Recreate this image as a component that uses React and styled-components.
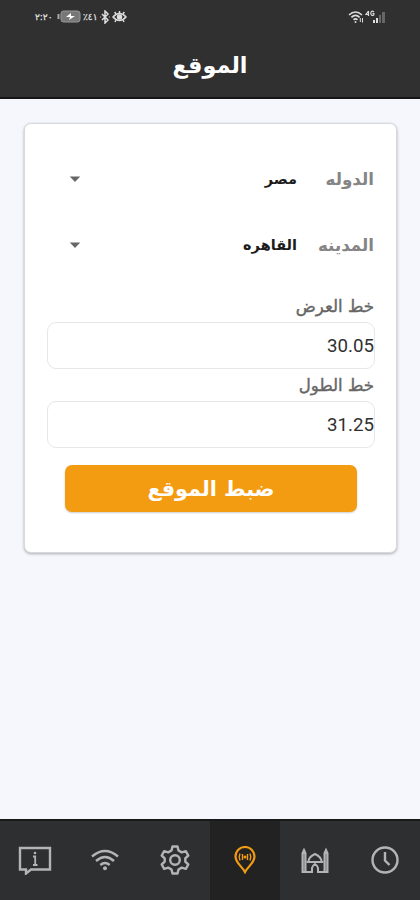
import React from 'react';
import styled, { createGlobalStyle } from 'styled-components';

const GlobalStyle = createGlobalStyle`
  * {
    box-sizing: border-box;
  }
  body {
    margin: 0;
    background: #f5f7fc;
    font-family: 'DejaVu Sans', sans-serif;
  }
`;

const Screen = styled.div`
  display: flex;
  flex-direction: column;
  width: 420px;
  height: 900px;
  overflow: hidden;
  background: #f5f7fc;
`;

const Header = styled.header`
  height: 99px;
  background: #303030;
  border-bottom: 2px solid #151515;
`;

const StatusBar = styled.div`
  display: flex;
  justify-content: space-between;
  align-items: center;
  height: 33px;
  padding: 0 34px 0 35px;
  color: #dedede;
`;

const StatusGroup = styled.div`
  display: flex;
  align-items: center;
  gap: ${({ $gap }) => $gap}px;
`;

const StatusText = styled.span`
  width: ${({ $width }) => $width}px;
  font-size: 9px;
  line-height: 12px;
  white-space: nowrap;
  direction: ltr;
  unicode-bidi: bidi-override;
  -webkit-text-stroke: 0.3px currentColor;
`;

const Title = styled.h1`
  margin: 0;
  height: 64px;
  line-height: 64px;
  font-size: 22.4px;
  font-weight: bold;
  text-align: center;
  color: #fff;
`;

const Content = styled.main`
  flex: 1;
  padding: 24px 23px 0 24px;
`;

const Card = styled.section`
  direction: rtl;
  height: 430px;
  padding: 22px 21px 0 22px;
  background: #fff;
  border: 1px solid #d8d9dc;
  border-radius: 7px;
  box-shadow: 0 1px 3px rgba(0, 0, 0, 0.3);
`;

const SelectRow = styled.div`
  display: flex;
  align-items: center;
  height: 66px;
  padding: 0 1px 0 22px;
`;

const SelectLabel = styled.span`
  width: 77px;
  font-size: 16.7px;
  font-weight: bold;
  white-space: nowrap;
  color: #858585;
`;

const SelectValue = styled.span`
  flex: 1;
  font-size: 14.5px;
  font-weight: bold;
  color: #1c1c1c;
`;

const Fields = styled.div`
  padding-top: 12px;
`;

const FieldLabel = styled.label`
  display: block;
  height: 32px;
  padding-right: 1px;
  line-height: 34px;
  font-size: 16.6px;
  color: #666;
  -webkit-text-stroke: 0.4px currentColor;
`;

const FieldInput = styled.input`
  display: block;
  width: 328px;
  height: 47px;
  padding: 0;
  border: 1px solid #e7e7e7;
  border-radius: 9px;
  outline: none;
  background: #fff;
  font-family: Roboto, sans-serif;
  font-size: 18.7px;
  color: #303030;
`;

const SubmitButton = styled.button`
  display: block;
  width: 292px;
  height: 47px;
  margin: 17px auto 0;
  padding: 0;
  border: 0;
  border-radius: 7px;
  background: #f39c12;
  box-shadow: 0 1px 2px rgba(0, 0, 0, 0.2);
  color: #fff;
  font-family: 'DejaVu Sans', sans-serif;
  font-size: 20.7px;
  font-weight: bold;
`;

const TabBar = styled.nav`
  display: grid;
  grid-template-columns: repeat(6, 1fr);
  height: 81px;
  background: #2e2f31;
  border-top: 2px solid #19191a;
`;

const Tab = styled.div`
  display: flex;
  align-items: center;
  justify-content: center;
  padding-bottom: 2px;
  color: ${({ $active }) => ($active ? '#f39c12' : '#b4b4b4')};
  background: ${({ $active }) => ($active ? '#222223' : 'transparent')};
`;

const Icon = styled.svg`
  display: block;
  flex: none;
  fill: none;
  stroke: currentColor;
`;

const Battery = () => (
  <Icon width="24" height="13" viewBox="0 0 24 13">
    <rect x="4" y="1" width="19" height="11" rx="2.5" fill="#777" stroke="#999" />
    <path d="M1.5 4v5" strokeWidth="2" stroke="#aaa" />
    <path d="M14 3l-5 4h4l-1 3 6-4h-4z" fill="#fff" stroke="none" />
  </Icon>
);

const Bluetooth = () => (
  <Icon width="10" height="14" viewBox="0 0 10 14" strokeWidth="1.5">
    <path d="M2 4l6 6-3 3V1l3 3-6 6M.5 7h.6M8.9 7h.6" />
  </Icon>
);

const Eye = () => (
  <Icon width="15" height="14" viewBox="0 0 15 14" strokeWidth="1.5">
    <path d="M1 7q6.5-7 13 0-6.5 7-13 0z" />
    <circle cx="7.5" cy="7" r="2" fill="currentColor" />
    <path d="M7.5 3.3V1M4 4L2.7 2M11 4l1.3-2M4 10l-1 2M11 10l1 2" />
  </Icon>
);

const StatusWifi = () => (
  <Icon width="16" height="14" viewBox="0 0 16 14" strokeWidth="1.6">
    <path d="M1 5q6.5-6 13 0M3.4 7.4q4.1-4 8.2 0M5.5 9.8q2-2 4 0" />
    <circle cx="7.5" cy="12" r="1" fill="currentColor" stroke="none" />
    <path d="M12.3 12V8M14.5 8v4.5" strokeWidth="1" />
  </Icon>
);

const Signal = () => (
  <Icon width="21" height="14" viewBox="0 0 21 14">
    <path d="M3.5 1L1 4.5h3M3.5 1v5M9 2Q6-.2 5.8 3.3 6 6.5 8.8 5V3.5H7.5" strokeWidth="1.2" />
    <path d="M8 13v-3h2v3zM11 13V8h2v5z" fill="currentColor" stroke="none" />
    <path d="M14 13V5h2v8zM17 13V2h3v11z" fill="#666" stroke="none" />
  </Icon>
);

const Caret = () => (
  <Icon width="12" height="7" viewBox="0 0 12 7">
    <path d="M.8.5h10.4L6 6z" fill="#666" stroke="none" />
  </Icon>
);

const InfoIcon = () => (
  <Icon width="34" height="30" viewBox="0 0 34 30" strokeWidth="2.4">
    <path d="M2 3h30v21.5H13l-5 4v-4H2z" />
    <path d="M15 11.5h2.2V20M15 20h4.5" strokeWidth="1.8" />
    <circle cx="17" cy="8" r="1.3" fill="currentColor" stroke="none" />
  </Icon>
);

const WifiIcon = () => (
  <Icon width="28" height="22" viewBox="0 0 28 22" strokeWidth="2.4">
    <path d="M1 7.5q13-11 26 0M5 12q9-8 18 0M9.3 16q4.700-4 9.400 0" />
    <circle cx="14" cy="19.3" r="2" fill="currentColor" stroke="none" />
  </Icon>
);

const GearIcon = () => (
  <Icon width="30" height="30" viewBox="0 0 30 30" strokeWidth="2.4" strokeLinejoin="round">
    <path d="M12.5 1.5h5l1 4 3.3 1.9 4-1.2 2.5 4.3-3 2.8v3.400l3 2.800-2.500 4.300-4-1.200-3.300 1.900-1 4h-5l-1-4-3.300-1.900-4 1.200-2.500-4.300 3-2.800v-3.400l-3-2.800 2.500-4.300 4 1.200 3.300-1.900z" />
    <circle cx="15" cy="15" r="4.8" />
  </Icon>
);

const PinIcon = () => (
  <Icon width="22" height="28" viewBox="0 0 22 28" strokeWidth="2.2">
    <path d="M11 26C9 21.5 1.5 17 1.5 10.5a9.5 9.5 0 0 1 19 0C20.5 17 13 21.5 11 26z" />
    <circle cx="11" cy="11" r="1.5" fill="currentColor" stroke="none" />
    <path d="M8.5 8v6M13.5 8v6M6 7.5q-1.6 3.5 0 7M16 7.5q1.6 3.5 0 7" strokeWidth="1.4" />
  </Icon>
);

const MosqueIcon = () => (
  <Icon width="28" height="28" viewBox="0 0 28 28">
    <path d="M.5 27V7L3 1.500 5.500 7v20zM22.500 27V7L25 1.500 27.500 7v20z" fill="currentColor" stroke="none" />
    <path d="M3 8v17M25 8v17" stroke="#77787a" strokeWidth="1" />
    <path d="M5.5 16h17M7.500 15.500q0-4.500 6.500-7.500 6.500 3 6.500 7.500" strokeWidth="2" />
    <path d="M3 26h8v-4q.5-2.500 3-4 2.500 1.500 3 4v4h8" strokeWidth="2" />
  </Icon>
);

const ClockIcon = () => (
  <Icon width="28" height="28" viewBox="0 0 28 28" strokeWidth="2.4">
    <circle cx="14" cy="14" r="12.5" />
    <path d="M14 6v8.5l4.500 4.500" />
  </Icon>
);

const tabs = [
  { name: 'info', icon: InfoIcon },
  { name: 'wifi', icon: WifiIcon },
  { name: 'settings', icon: GearIcon },
  { name: 'location', icon: PinIcon, active: true },
  { name: 'mosque', icon: MosqueIcon },
  { name: 'clock', icon: ClockIcon },
];

const selects = [
  { label: 'الدوله', value: 'مصر' },
  { label: 'المدينه', value: 'القاهره' },
];

const fields = [
  { label: 'خط العرض', value: '30.05' },
  { label: 'خط الطول', value: '31.25' },
];

const App = () => {
  return (
    <>
      <GlobalStyle />
      <Screen>
        <Header>
          <StatusBar>
            <StatusGroup $gap={2}>
              <StatusText $width={20}>٢:٢٠</StatusText>
              <Battery />
              <StatusText $width={15}>٪٤١</StatusText>
              <Bluetooth />
              <Eye />
            </StatusGroup>
            <StatusGroup $gap={1}>
              <StatusWifi />
              <Signal />
            </StatusGroup>
          </StatusBar>
          <Title>الموقع</Title>
        </Header>
        <Content>
          <Card>
            {selects.map(({ label, value }) => (
              <SelectRow key={label}>
                <SelectLabel>{label}</SelectLabel>
                <SelectValue>{value}</SelectValue>
                <Caret />
              </SelectRow>
            ))}
            <Fields>
              {fields.map(({ label, value }) => (
                <React.Fragment key={label}>
                  <FieldLabel>{label}</FieldLabel>
                  <FieldInput defaultValue={value} />
                </React.Fragment>
              ))}
            </Fields>
            <SubmitButton>ضبط الموقع</SubmitButton>
          </Card>
        </Content>
        <TabBar>
          {tabs.map(({ name, icon: TabIcon, active }) => (
            <Tab key={name} $active={active}>
              <TabIcon />
            </Tab>
          ))}
        </TabBar>
      </Screen>
    </>
  );
};

export default App;
